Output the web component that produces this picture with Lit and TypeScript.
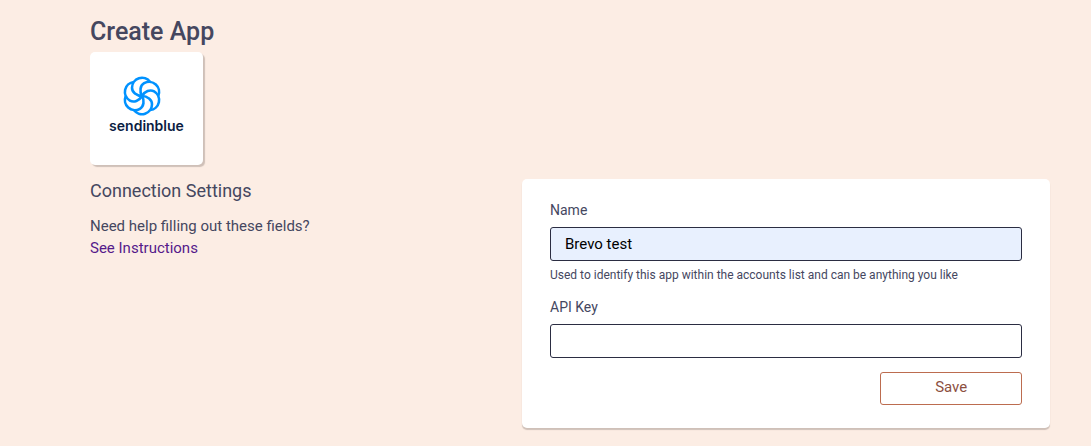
import { LitElement, html, svg, css } from "lit";
import { customElement, property } from "lit/decorators.js";

const PETAL_ANGLES = [0, 60, 120, 180, 240, 300];

@customElement("app-logo-card")
class AppLogoCard extends LitElement {
  static styles = css`
    :host {
      display: block;
    }
    .card {
      box-sizing: border-box;
      width: 113px;
      height: 113px;
      padding-top: 24px;
      display: flex;
      flex-direction: column;
      align-items: center;
      background: #fff;
      border-radius: 5px;
      box-shadow: 2px 2px 1px #cfc0b8;
    }
    .mark {
      display: block;
      margin-right: 9px;
    }
    .word {
      font: 600 14px/14px Inter, sans-serif;
      margin-top: 3px;
      color: #0b1d42;
    }
  `;

  render() {
    return html`
      <div class="card">
        <svg class="mark" width="40" height="40" viewBox="-20 -20 40 40" aria-hidden="true">
          <g fill="none" stroke="#0092ff" stroke-width="2.6" stroke-linejoin="round">
            ${PETAL_ANGLES.map(
              (angle) => svg`<path transform="rotate(${angle})" d="M0 0C-5.5 0 -10 -3.7 -10 -8.2A10 10 0 0 1 8.1 -14.05" />`
            )}
          </g>
        </svg>
        <span class="word">sendinblue</span>
      </div>
    `;
  }
}

@customElement("connection-form")
class ConnectionForm extends LitElement {
  static styles = css`
    :host {
      display: block;
    }
    .panel {
      display: flex;
      flex-direction: column;
      padding: 20px 28px 23px;
      background: #fff;
      border-radius: 5px;
      box-shadow: 0 2px 1px #cfc0b8;
      color: #45475f;
    }
    .label {
      font-size: 14px;
      line-height: 22px;
      margin-bottom: 6px;
    }
    .input {
      box-sizing: border-box;
      width: 100%;
      height: 34px;
      margin: 0;
      padding: 0 14px;
      border: 1px solid #2b2d42;
      border-radius: 3px;
      background: #fff;
      color: #000;
      font: 15px Roboto, sans-serif;
      outline: none;
    }
    .filled {
      background: #e8f0fe;
    }
    .hint {
      margin: 6px 0 12px;
      font-size: 12px;
      line-height: 17px;
    }
    .save {
      align-self: flex-end;
      box-sizing: border-box;
      width: 30%;
      height: 33px;
      margin: 14px 0 0;
      padding: 0 0 3px;
      border: 1px solid #bc6c4f;
      border-radius: 3px;
      background: #fff;
      color: #8c4f3f;
      font: 15px Roboto, sans-serif;
      cursor: pointer;
    }
  `;

  @property() name = "";

  render() {
    return html`
      <form class="panel" @submit=${(e: Event) => e.preventDefault()}>
        <label class="label" for="name">Name</label>
        <input
          class="input ${this.name ? "filled" : ""}"
          id="name"
          type="text"
          aria-describedby="name-hint"
          .value=${this.name}
        />
        <p class="hint" id="name-hint">
          Used to identify this app within the accounts list and can be anything you like
        </p>
        <label class="label" for="key">API Key</label>
        <input class="input" id="key" type="text" />
        <button class="save" type="submit">Save</button>
      </form>
    `;
  }
}

@customElement("app-root")
class AppRoot extends LitElement {
  static styles = css`
    :host {
      display: block;
      box-sizing: border-box;
      min-height: 100vh;
      padding: 16px 41px 17px 90px;
      background: #fcede4;
      color: #45475f;
      font-family: Roboto, sans-serif;
    }
    .title {
      margin: 0 0 4px;
      font-size: 25px;
      line-height: 32px;
      font-weight: 500;
    }
    .settings {
      display: grid;
      grid-template-columns: 45fr 55fr;
      align-items: start;
      margin-top: 14px;
    }
    .heading {
      margin: 0 0 12px;
      font-size: 18px;
      line-height: 24px;
      font-weight: 400;
    }
    .help {
      margin: 0;
      font-size: 15px;
      line-height: 22px;
    }
    .link {
      color: #551a8b;
      text-decoration: none;
    }
  `;

  render() {
    return html`
      <h1 class="title">Create App</h1>
      <app-logo-card></app-logo-card>
      <section class="settings">
        <div>
          <h2 class="heading">Connection Settings</h2>
          <p class="help">
            Need help filling out these fields?<br />
            <a class="link" href="#instructions">See Instructions</a>
          </p>
        </div>
        <connection-form name="Brevo test"></connection-form>
      </section>
    `;
  }
}
